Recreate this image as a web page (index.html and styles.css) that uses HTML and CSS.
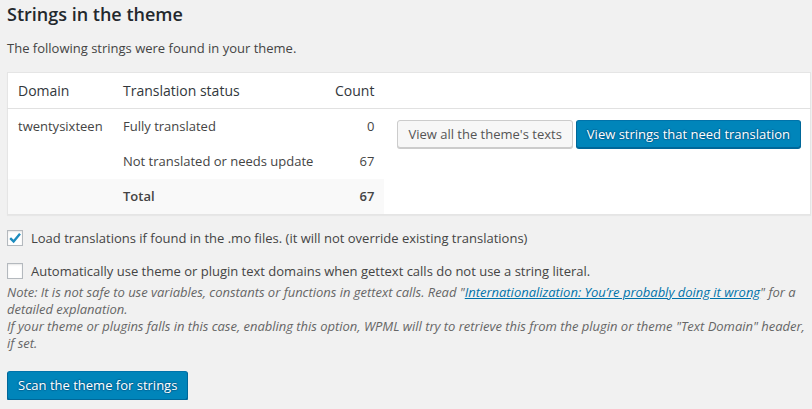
FILE: index.html
```html
<!DOCTYPE html>
<html>
<head>
<meta charset="utf-8">
<link rel="stylesheet" href="styles.css">
</head>
<body>
<div class="wrap">
  <h3 class="title">Strings in the theme</h3>
  <p class="intro">The following strings were found in your theme.</p>
  <table class="strings">
    <thead>
      <tr>
        <th class="c-domain">Domain</th>
        <th class="c-status">Translation status</th>
        <th class="c-count">Count</th>
        <th class="c-actions"></th>
      </tr>
    </thead>
    <tbody>
      <tr>
        <td class="c-domain">twentysixteen</td>
        <td class="c-status">Fully translated</td>
        <td class="c-count">0</td>
        <td class="c-actions" rowspan="3">
          <div class="actions">
            <button class="btn btn-secondary">View all the theme's texts</button>
            <button class="btn btn-primary">View strings that need translation</button>
          </div>
        </td>
      </tr>
      <tr>
        <td class="c-domain"></td>
        <td class="c-status">Not translated or needs update</td>
        <td class="c-count">67</td>
      </tr>
      <tr class="total">
        <td class="c-domain"></td>
        <td class="c-status"><strong>Total</strong></td>
        <td class="c-count"><strong>67</strong></td>
      </tr>
    </tbody>
  </table>

  <label class="check check-first">
    <span class="box"><svg width="16" height="16" viewBox="0 0 16 16"><polyline points="3.2,8.2 6.6,11.4 13,3.8" fill="none" stroke="#1e8cbe" stroke-width="2.4" stroke-linejoin="miter"/></svg></span>
    <span>Load translations if found in the .mo files. (it will not override existing translations)</span>
  </label>
  <label class="check check-second">
    <span class="box"></span>
    <span>Automatically use theme or plugin text domains when gettext calls do not use a string literal.</span>
  </label>
  <p class="note">Note: It is not safe to use variables, constants or functions in gettext calls. Read "<a href="#">Internationalization: You’re probably doing it wrong</a>" for a detailed explanation.<br>If your theme or plugins falls in this case, enabling this option, WPML will try to retrieve this from the plugin or theme "Text Domain" header, if set.</p>

  <button class="btn btn-primary btn-scan">Scan the theme for strings</button>
</div>
</body>
</html>
```

FILE: styles.css
```css
html, body {
  margin: 0;
  padding: 0;
  background: #f1f1f1;
}
body {
  font-family: "Open Sans", "Liberation Sans", sans-serif;
  font-size: 13px;
  line-height: 1.4;
  color: #444;
}
.wrap {
  padding: 0 0 0 7px;
}
.title {
  margin: 0;
  padding-top: 2px;
  font-size: 18px;
  font-weight: 600;
  line-height: 24px;
  color: #23282d;
}
.intro {
  margin: 12px 0 0;
  line-height: 20px;
}
.strings {
  margin-top: 14px;
  width: 804px;
  border-collapse: collapse;
  background: #fff;
  border: 1px solid #e5e5e5;
  box-shadow: 0 1px 1px rgba(0,0,0,.04);
}
.strings th {
  text-align: left;
  font-weight: 400;
  font-size: 14px;
  color: #32373c;
  height: 35px;
  padding: 0 10px;
  border-bottom: 1px solid #e1e1e1;
  white-space: nowrap;
}
.strings td {
  height: 35px;
  padding: 0 10px;
  vertical-align: middle;
  white-space: nowrap;
}
.strings .c-domain { width: 85px; }
.strings .c-status { width: 190px; }
.strings .c-count { width: 41px; text-align: right; }
.strings th.c-count { text-align: right; }
.strings td.c-actions {
  vertical-align: top;
  padding: 11px 0 0 13px;
  background: #fff;
  width: auto;
}
.strings strong { font-weight: 600; }
.total td { background: #f9f9f9; }
.actions {
  display: flex;
  gap: 3px;
}
.btn {
  font-family: "Open Sans", "Liberation Sans", sans-serif;
  font-size: 13px;
  line-height: 26px;
  height: 28px;
  padding: 0 10px 1px;
  border-radius: 3px;
  border: 1px solid;
  cursor: pointer;
  white-space: nowrap;
  box-sizing: border-box;
}
.btn-secondary {
  color: #555;
  background: #f7f7f7;
  border-color: #ccc;
  box-shadow: 0 1px 0 #ccc;
}
.btn-primary {
  color: #fff;
  background: #0085ba;
  border-color: #0073aa #006799 #006799;
  box-shadow: 0 1px 0 #006799;
  text-shadow: 0 -1px 1px #006799, 1px 0 1px #006799, 0 1px 1px #006799, -1px 0 1px #006799;
}
.check {
  display: flex;
  align-items: center;
  gap: 8px;
  height: 20px;
}
.check-first { margin-top: 13px; }
.check-second { margin-top: 13px; }
.box {
  width: 16px;
  height: 16px;
  box-sizing: border-box;
  border: 1px solid #b4b9be;
  background: #fff;
  box-shadow: inset 0 1px 2px rgba(0,0,0,.1);
  display: flex;
  align-items: center;
  justify-content: center;
  flex: none;
}
.box svg { display: block; margin: -1px; }
.note {
  margin: 3px 0 0;
  font-style: italic;
  color: #666;
  line-height: 17px;
  width: 805px;
  letter-spacing: -0.02px;
}
.note a { color: #0073aa; }
.btn-scan {
  margin-top: 19px;
  height: 29px;
  display: block;
}
```
